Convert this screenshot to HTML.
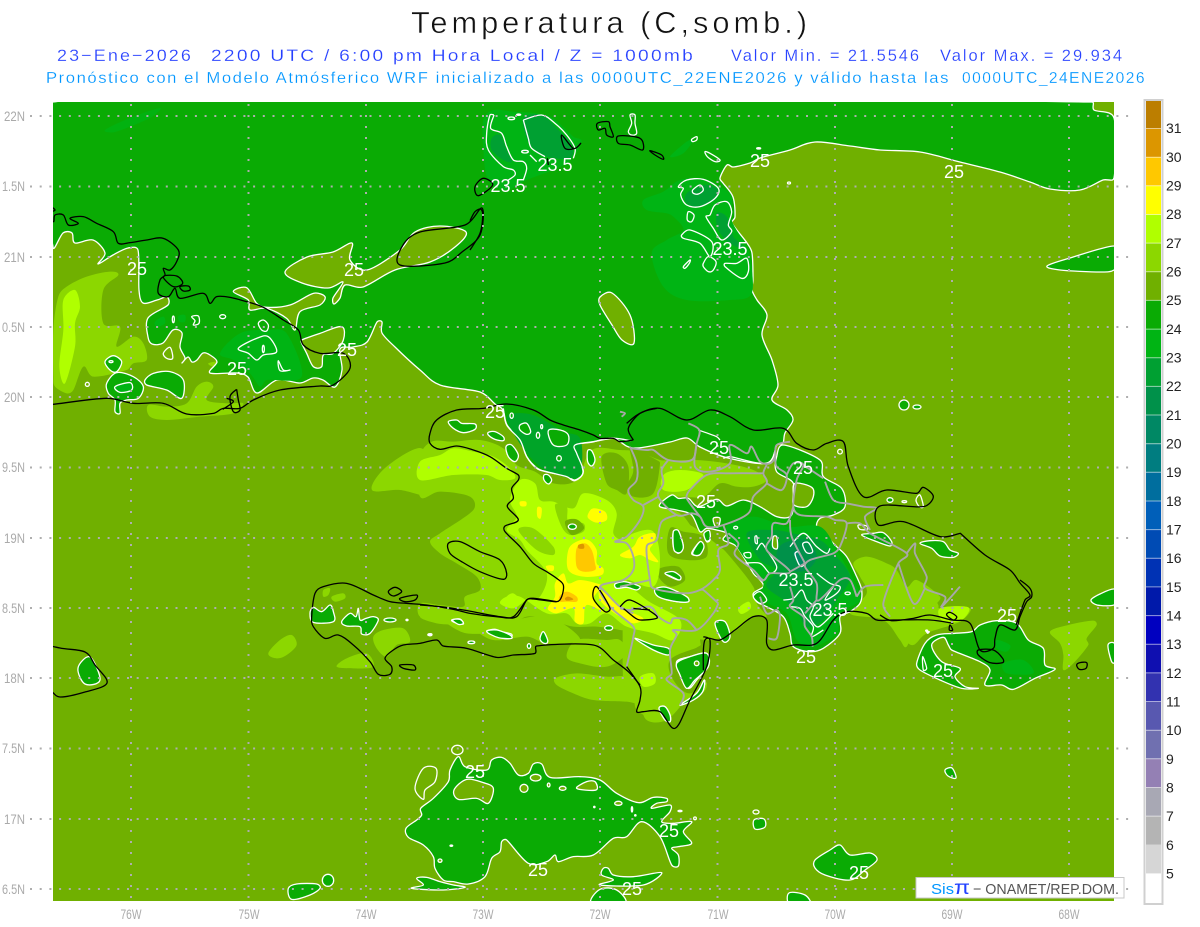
<!DOCTYPE html>
<html><head><meta charset="utf-8"><title>Temperatura</title>
<style>
html,body{margin:0;padding:0;background:#fff;width:1200px;height:927px;overflow:hidden}
svg{display:block;font-family:"Liberation Sans",sans-serif;filter:blur(.3px)}
svg *{vector-effect:non-scaling-stroke}
.lt{fill:#8CD700}.lm{fill:#B0FF00}.ol{fill:#70B000}.yl{fill:#FFFF00}.or{fill:#FFC800}.dk{fill:#DC9600}
.a{fill:#00B414}.b{fill:#00A032}.c{fill:#00914A}.d{fill:#008864}.e{fill:#00A428}
.g{fill:#0AAB04;stroke:#fff;stroke-width:1.3;stroke-linejoin:round}
.o{fill:#70B000;stroke:#fff;stroke-width:1.3;stroke-linejoin:round}
.w{fill:none;stroke:#fff;stroke-width:1.3;stroke-linejoin:round}
.k{fill:none;stroke:#000;stroke-width:1.3;stroke-linejoin:round}
.p{fill:none;stroke:#A8A8A8;stroke-width:1.9;stroke-linejoin:round}
.lab text{fill:#fff;font-size:18px;text-anchor:middle}
.ax text{fill:#AAAAAA;font-size:14px}
.cb text{fill:#222;font-size:14px}
</style></head><body>
<svg width="1200" height="927" viewBox="0 0 1200 927" xmlns="http://www.w3.org/2000/svg">
<rect width="1200" height="927" fill="#fff"/>
<text x="411" y="33" font-size="31" fill="#111" textLength="400" lengthAdjust="spacingAndGlyphs" letter-spacing="4" stroke="#fff" stroke-width=".5">Temperatura (C,somb.)</text>
<g font-size="17" fill="#2640FF" letter-spacing="2" stroke="#fff" stroke-width=".2">
<text x="57" y="61" textLength="136" lengthAdjust="spacingAndGlyphs">23−Ene−2026</text>
<text x="211" y="61" textLength="484" lengthAdjust="spacingAndGlyphs">2200 UTC / 6:00 pm Hora Local / Z = 1000mb</text>
<text x="731" y="61" textLength="190" lengthAdjust="spacingAndGlyphs">Valor Min. = 21.5546</text>
<text x="940" y="61" textLength="184" lengthAdjust="spacingAndGlyphs">Valor Max. = 29.934</text>
</g>
<g font-size="16" fill="#0096FF" letter-spacing="1.5" stroke="#fff" stroke-width=".2">
<text x="46" y="83" textLength="904" lengthAdjust="spacingAndGlyphs">Pronóstico con el Modelo Atmósferico WRF inicializado a las 0000UTC_22ENE2026 y válido hasta las</text>
<text x="962" y="83" textLength="184" lengthAdjust="spacingAndGlyphs">0000UTC_24ENE2026</text>
</g>
<defs><clipPath id="m"><rect x="53" y="102" width="1061" height="799"/></clipPath></defs>
<g clip-path="url(#m)">
<rect x="53" y="102" width="1061" height="799" fill="#70B000"/>

<!-- Cuba warm patches -->
<g transform="translate(0,190) scale(.33333)">
<polygon class="lt" points="160,420 175,320 200,290 260,260 330,245 355,255 310,300 310,400 360,410 350,470 400,440 430,460 440,510 400,520 380,540 280,560 250,530 220,600 200,610 165,590 160,560"/>
<polygon class="lm" points="190,330 225,300 240,350 225,400 225,470 195,580 178,530 190,420"/>
<polygon class="lt" points="445,645 500,650 560,640 590,590 620,575 640,590 620,630 680,640 730,640 700,670 600,680 500,690 450,680"/>
<polygon class="lt" points="625,520 660,515 680,530 640,530"/>
</g>

<!-- Haiti base light -->
<polygon class="lt" points="372,490 385,468 420,448 430,470 430,495 400,490"/>
<g transform="translate(420,400) scale(.33333)">
<polygon class="lt" points="405,835 470,820 560,830 620,830 660,860 665,910 620,905 520,900 460,880 410,855"/>
<polygon class="lt" points="0,170 35,125 100,125 180,120 250,145 290,195 345,215 400,250 470,240 515,150 600,150 650,155 720,180 760,190 740,300 800,360 880,500 900,640 840,690 860,860 800,900 740,960 680,960 660,900 630,780 640,700 600,690 530,680 460,680 390,660 320,650 250,690 140,700 60,660 0,650 0,610 60,615 130,620 135,590 180,570 170,530 110,490 60,460 30,425 60,400 160,330 150,290 60,275 0,290"/>
</g>

<!-- DR warm/cool detail base -->
<g transform="translate(620,400) scale(.33333)">
<polygon class="lt" points="120,185 220,180 320,190 400,210 440,240 400,260 350,260 300,250 250,290 180,290 120,295 100,340 130,370 200,370 300,440 330,470 400,560 410,610 440,650 400,650 350,690 280,720 220,720 190,770 200,900 150,920 100,950 50,930 40,880 10,850 10,500 10,200"/>
<polygon class="ol" points="150,385 190,395 250,410 260,470 200,480 145,460"/>
<polygon class="ol" points="120,505 175,500 195,540 150,560 115,530"/>
<polygon class="ol" points="225,745 265,735 270,830 210,880 160,840 150,780"/>
<polygon class="ol" points="20,100 60,150 110,180 120,190 100,280 40,290 20,260 40,210"/>
<polygon class="lm" points="180,235 205,232 210,245 185,250"/>
<polygon class="lm" points="355,625 385,605 392,625 365,642"/>
<polygon class="lm" points="130,225 180,210 250,225 200,270 130,270"/>
<polygon class="lt" points="700,490 740,470 800,490 830,510 860,560 890,540 960,590 950,620 1020,650 1020,665 900,660 860,740 840,720 790,660 690,640 740,580 720,530"/>
</g>
<g transform="translate(880,580) scale(.33333)">
<polygon class="lt" points="510,155 565,135 640,122 650,135 620,175 625,195 580,250 550,270 550,225 540,190"/>
<polygon class="lt" points="100,30 130,10 150,40 175,75 175,110 270,85 240,125 140,160 100,195 70,175 30,125 0,100 0,60 30,60 60,70"/>
<polygon class="lm" points="180,85 265,82 245,120 190,125"/>
</g>

<!-- Haiti warm detail -->
<g transform="translate(420,400) scale(.33333)">
<polygon class="ol" points="545,170 590,160 625,200 620,280 590,270 560,250"/>
<polygon class="lm" points="0,185 60,165 100,145 160,155 220,170 270,205 285,235 240,240 200,225 100,225 0,240"/>
<polygon class="lm" points="300,240 345,250 360,300 400,305 460,325 490,280 560,300 590,340 580,400 610,420 640,400 700,395 720,480 700,560 620,540 680,600 780,660 760,720 700,700 620,680 560,640 510,670 470,670 440,640 380,640 300,590 260,590 240,610 280,625 320,600 360,590 380,520 320,450 300,420 260,390 290,350 270,300"/>
<polygon class="lt" points="295,390 340,385 400,440 400,465 350,450"/>
<polygon class="lt" points="405,315 440,320 445,365 490,370 490,395 450,405 425,380"/>
<polygon class="ol" points="435,365 470,358 492,385 455,405"/>
<polygon class="lt" points="180,500 220,510 250,540 200,530"/>
<polygon class="lt" points="440,770 470,720 560,720 600,720 620,760 560,800 480,790"/>
<polygon class="lm" points="660,830 700,820 705,850 670,860"/>
<polygon class="lm" points="260,590 280,580 298,600 280,620 262,610"/>
<polygon class="yl" points="505,340 520,325 555,335 560,360 530,368 505,355"/>
<polygon class="yl" points="300,305 318,305 318,318 302,318"/>
<polygon class="yl" points="352,322 365,325 362,355 352,350"/>
<polygon class="yl" points="378,498 400,497 400,512 385,512"/>
<polygon class="yl" points="470,425 505,420 530,450 530,490 550,505 545,525 490,530 445,510 445,450"/>
<polygon class="yl" points="385,620 405,590 405,550 430,520 445,550 480,540 530,550 545,560 520,600 560,640 500,615 490,670 465,665 460,625 410,640 385,630"/>
<polygon class="yl" points="540,570 580,600 620,630 670,655 640,670 600,650 570,630 540,600"/>
<polygon class="yl" points="600,465 640,440 660,410 705,400 700,430 690,450 715,485 690,480 660,465 630,475"/>
<polygon class="or" points="470,445 495,430 515,450 525,490 525,510 490,515 470,500"/>
<polygon class="or" points="418,590 440,575 470,590 470,605 440,605 420,605"/>
<polygon class="dk" points="475,435 490,432 492,445 476,445"/>
<polygon class="dk" points="435,595 445,590 460,598 440,602"/>
</g>

<!-- Haiti south peninsula -->
<g transform="translate(280,560) scale(.33333)">
<polygon class="lt" points="-35,280 0,240 35,225 50,255 20,285 -10,295"/>
<polygon class="lt" points="170,320 200,295 260,280 280,320 220,325"/>
<polygon class="lt" points="280,230 310,210 370,205 390,245 350,255 320,290 290,265"/>
<polygon class="lt" points="130,90 150,85 145,105 130,110"/>
<polygon class="lt" points="155,110 190,100 195,115 165,125"/>
<polygon class="lt" points="420,170 470,150 560,170 650,190 760,170 830,180 900,240 800,250 740,230 640,240 560,200 470,190"/>
</g>

<!-- Main northern green -->
<polygon class="g" points="53,102 1092,102 1094,110 1114,118 1114,178 1103,180 1080,190 1050,189 1030,182 1000,172 960,162 920,152 880,150 850,146 815,142 790,150 760,158 750,163 733,167 727,165 720,178 723,183 733,197 735,217 732,223 747,243 752,253 753,280 752,290 757,300 767,315 762,335 772,360 778,385 772,400 787,410 793,420 785,433 783,443 777,445 767,463 728,458 700,447 687,438 670,442 633,448 613,438 593,442 575,445 577,453 583,472 575,480 567,476 547,472 537,468 527,457 520,440 507,425 503,410 495,404 480,392 440,385 420,370 395,347 382,333 382,322 377,322 367,342 353,347 340,349 342,370 335,387 323,380 313,378 300,383 277,380 257,393 248,377 237,373 210,373 217,362 210,355 203,353 197,360 192,362 188,357 182,363 185,358 180,347 182,333 173,330 163,343 152,344 148,337 148,318 168,305 167,297 157,300 143,303 139,290 138,250 128,248 113,255 98,264 105,253 93,240 75,243 72,233 63,233 53,247"/>
<polygon class="a" points="105,130 130,118 160,108 150,118 115,132" opacity=".8"/>

<!-- Bahamas & NE cool patches -->
<g transform="translate(470,100) scale(.33333)">
<polygon class="a" points="40,60 70,30 130,35 200,40 250,55 310,110 335,125 290,190 170,240 110,270 55,240 40,150"/>
<polygon class="b" points="160,55 215,45 270,95 305,135 300,175 230,170 190,145 170,115"/>
<polygon class="b" points="65,115 90,105 110,150 125,185 100,180 65,150"/>
<polygon class="a" points="520,300 580,275 630,240 700,235 750,260 785,290 785,360 825,430 840,470 845,580 780,600 650,600 580,560 545,460 590,420 640,390 610,350 590,340 530,330"/>
<polygon class="a" points="600,170 650,125 670,120 640,160"/>
<polygon class="b" points="650,280 700,255 740,265 740,295 690,320 650,310"/>
<polygon class="b" points="740,340 770,350 790,410 800,420 830,450 780,430 745,390"/>
<polyline class="w" points="72,45 60,45 50,100 55,150 100,200 130,210 135,225 115,240"/>
<polyline class="w" points="72,45 62,85 95,100 110,140 130,180 160,185 170,205 160,240"/>
<polyline class="w" points="160,60 215,45 255,70 290,105 315,145 310,175"/>
<polyline class="w" points="160,60 175,115 185,145 225,170"/>
<ellipse class="w" cx="124" cy="55" rx="10" ry="4"/><ellipse class="w" cx="146" cy="44" rx="6" ry="2"/>
<ellipse class="w" cx="165" cy="155" rx="10" ry="4"/><polyline class="w" points="180,165 200,185"/>
<polygon class="w" points="480,45 495,45 495,70 500,100 485,105 475,95 485,70"/>
<polygon class="w" points="665,118 680,110 680,120 668,125"/>
<polygon class="w" points="705,155 720,160 750,180 735,185 712,170"/>
<ellipse class="w" cx="866" cy="145" rx="6" ry="2"/>
<polygon class="w" points="625,260 650,240 700,238 745,265 735,295 690,320 650,315 632,285 640,265"/>
<polygon class="w" points="668,270 690,255 700,270 685,282 670,280"/>
<polygon class="w" points="655,335 672,345 665,365 652,360"/>
<polygon class="w" points="720,345 735,315 770,305 785,335 775,375 785,395 755,420 730,385 708,350"/>
<polygon class="w" points="635,405 660,390 725,425 720,470 690,430 640,415"/>
<polygon class="w" points="700,490 715,470 738,485 730,510 715,515 700,500"/>
<polygon class="w" points="640,500 660,480 658,490 645,505"/>
<polygon class="w" points="765,490 800,490 830,475 835,515 815,535 765,500"/>
</g>

<!-- Olive islands in the north green -->
<polygon class="o" points="285,272 307,257 333,252 352,243 350,260 367,270 400,250 415,232 440,226 466,232 455,247 430,262 395,270 363,287 345,285 340,298 334,304 333,298 343,282 328,288 302,283"/>
<g transform="translate(0,190) scale(.33333)">
<polygon class="a" points="660,490 720,430 800,420 860,430 905,560 800,570 780,590 750,550 700,510"/>
<polygon class="a" points="465,395 490,380 495,400 470,410"/>
<polygon class="a" points="535,378 555,375 555,395 538,395"/>
<polygon class="o" points="700,305 740,293 770,340 800,352 870,345 940,310 975,320 960,345 900,365 885,420 860,385 800,355 750,360 745,330"/>
<polygon class="o" points="905,450 960,430 1025,410 1030,450 1000,490 970,495 965,530 940,530 920,490 905,460"/>
<polygon class="g" points="320,580 350,548 400,560 430,590 415,625 380,630 360,640 360,670 345,665 345,630 325,610"/>
<polygon class="a" points="345,590 390,578 395,600 360,607"/>
<polygon class="w" points="345,590 390,578 395,600 360,607"/>
<polygon class="g" points="315,515 340,497 365,515 350,545 330,540"/>
<ellipse class="w" cx="333" cy="515" rx="6" ry="3"/>
<polygon class="g" points="435,570 460,550 510,545 550,570 545,625 500,600 440,585"/>
<polygon class="o" points="490,490 510,472 518,505 500,505"/>
<circle class="w" cx="262" cy="583" r="6"/>
<polygon class="w" points="775,400 790,390 805,405 800,423 785,420"/>
<polygon class="w" points="715,475 770,445 805,440 830,485 790,495 770,510 745,490"/>
<ellipse class="w" cx="520" cy="388" rx="3" ry="10"/>
<polygon class="w" points="575,380 595,378 597,400 580,405 585,392"/>
<ellipse class="w" cx="668" cy="380" rx="9" ry="6"/>
<ellipse class="w" cx="790" cy="477" rx="3" ry="11"/>
<polygon class="w" points="835,512 850,540 870,540 840,542"/>
</g>
<polygon class="o" points="600,297 612,293 630,315 634,343 622,340 612,325 600,305"/>

<!-- Green sea lenses -->
<polygon class="g" points="1047,266 1070,258 1114,246 1120,258 1114,270 1100,272 1060,270"/>
<polygon class="g" points="1091,600 1100,594 1114,589 1120,597 1114,605 1097,605"/>
<polygon class="g" points="1108,645 1114,643 1120,653 1114,663 1111,660"/>
<circle class="g" cx="904" cy="405" r="5"/><ellipse class="g" cx="917" cy="407" rx="4" ry="2"/>
<ellipse class="w" cx="789" cy="183" rx="1.5" ry="1"/>
<polygon class="g" points="945,770 952,768 956,778 948,776"/>
<polygon class="g" points="815,860 830,850 840,845 850,855 870,853 877,860 865,870 850,880 825,875 815,868"/>
<polygon class="g" points="754,820 764,819 765,827 755,829"/>
<ellipse class="w" cx="756" cy="812" rx="3" ry="2"/>
<polygon class="g" points="789,893 805,895 810,905 790,905"/>

<!-- South sea blobs -->
<g transform="translate(280,740) scale(.33333)">
<polygon class="g" points="378,265 410,240 425,225 422,205 460,175 505,125 510,90 535,50 555,80 620,90 635,60 665,52 690,70 715,105 745,100 760,72 785,72 810,112 900,110 960,120 1010,160 1075,188 1120,172 1160,175 1160,185 1130,190 1115,205 1170,195 1170,215 1145,245 1180,250 1235,245 1210,275 1235,310 1195,320 1175,325 1195,345 1195,378 1175,375 1140,290 1085,245 1040,290 1000,295 940,345 880,350 835,365 825,345 800,365 745,370 680,300 665,305 660,335 635,355 615,410 565,432 520,425 490,420 465,385 460,350 430,315 385,292"/>
<polygon class="o" points="522,150 560,118 610,128 640,145 625,190 590,175 535,178"/>
<polygon class="o" points="890,145 920,125 945,125 948,150"/>
<polygon class="o" points="405,145 430,85 468,85 465,125 435,150 430,178"/>
<ellipse class="o" cx="532" cy="30" rx="17" ry="14"/>
<polygon class="g" points="410,415 440,412 480,425 520,435 555,442 490,450 395,445 430,435"/>
<polygon class="g" points="25,445 50,432 110,432 120,445 90,465 35,478"/>
<ellipse class="g" cx="144" cy="421" rx="17" ry="18"/>
<polygon class="g" points="970,385 985,385 1000,405 1060,410 1145,398 1090,435 960,435 1000,420 965,405"/>
<polygon class="g" points="935,490 960,448 1010,450 1035,490"/>
<ellipse class="o" cx="767" cy="113" rx="16" ry="10"/><ellipse class="o" cx="732" cy="145" rx="12" ry="12"/>
<ellipse class="o" cx="848" cy="145" rx="10" ry="6"/><ellipse class="o" cx="1015" cy="190" rx="11" ry="6"/>
<ellipse class="o" cx="806" cy="135" rx="4" ry="6"/><ellipse class="o" cx="1056" cy="208" rx="2" ry="8"/>
<ellipse class="o" cx="480" cy="362" rx="6" ry="5"/><ellipse class="w" cx="514" cy="317" rx="4" ry="2"/>
<ellipse class="w" cx="943" cy="201" rx="2" ry="2"/><ellipse class="w" cx="1200" cy="213" rx="6" ry="2"/><circle class="w" cx="1245" cy="235" r="4"/>
<ellipse class="w" cx="1066" cy="226" rx="2" ry="2"/>
</g>

<!-- East blob -->
<g transform="translate(880,580) scale(.33333)">
<polygon class="g" points="110,250 135,190 170,165 225,160 275,155 300,135 350,122 410,130 445,180 490,205 495,255 525,268 465,295 400,328 365,315 315,315 330,270 300,245 215,210 205,195 190,172 155,195 185,245 240,265 225,290 255,320 295,325 245,325 180,300 120,270"/>
<polygon class="a" points="370,250 430,240 460,280 380,280"/>
<polygon class="a" points="350,180 390,195 380,215 350,205"/>
<polygon class="w" points="128,230 140,265 130,270"/>
<polygon class="w" points="140,155 148,155 143,160" style="fill:#fff"/>
</g>

<!-- Haiti green loops -->
<g transform="translate(420,400) scale(.33333)">
<polygon class="e" points="265,45 340,45 430,95 480,115 485,200 465,235 380,212 325,165 275,90"/>
<polyline class="w" points="250,25 260,75 300,120 320,170 350,205 380,215 440,230 465,242 490,215 470,160 465,135 520,125 580,115 632,122"/>
<polygon class="g" points="85,65 110,60 125,70 165,72 165,88 130,98 100,85"/>
<polygon class="g" points="205,97 225,95 250,110 250,122 225,118 205,105"/>
<polygon class="g" points="258,140 275,135 295,165 285,185 265,170"/>
<polygon class="g" points="300,75 320,70 332,95 320,103 300,90"/>
<ellipse class="g" cx="275" cy="47" rx="5" ry="8"/><ellipse class="g" cx="365" cy="80" rx="3" ry="6"/>
<ellipse class="g" cx="354" cy="106" rx="5" ry="9"/><ellipse class="g" cx="417" cy="175" rx="7" ry="8"/>
<polygon class="g" points="385,92 420,90 445,105 440,135 400,135"/>
<polygon class="g" points="503,152 515,152 525,180 515,198 503,185"/>
<polygon class="g" points="372,225 385,225 395,240 385,252 372,240"/>
<ellipse class="g" cx="457" cy="380" rx="12" ry="8"/>
<polygon class="g" points="95,660 120,657 130,672 105,668"/>
<polygon class="g" points="200,693 225,688 245,695 275,703 268,716 240,712 225,698"/>
<ellipse class="o" cx="154" cy="727" rx="10" ry="3"/>
<polygon class="g" points="360,715 370,695 383,720 380,730 368,728"/>
<ellipse class="g" cx="327" cy="738" rx="5" ry="7"/>
<ellipse class="g" cx="566" cy="684" rx="12" ry="7"/>
<polygon points="22,703 35,700 35,708 25,708" fill="#fff"/>
<polygon class="g" points="585,552 610,545 635,550 660,560 650,570 620,562 590,565"/>
<polygon class="g" points="708,568 730,565 770,582 800,590 805,605 770,605 720,592"/>
<polygon class="g" points="735,520 755,518 780,530 775,540 750,530"/>
<polygon class="g" points="645,715 700,735 745,745 745,765 700,750"/>
<polygon class="g" points="770,785 810,770 860,760 860,800 830,840 805,865 785,825"/>
<ellipse class="o" cx="830" cy="790" rx="7" ry="7"/>
<polygon class="g" points="780,915 830,880 853,840 848,875 820,900"/>
<polygon class="g" points="717,925 735,920 750,945 750,965 735,960"/>
<polygon class="g" points="760,395 775,395 790,440 775,460 760,440"/>
<polygon class="g" points="815,460 840,425 850,440 838,465"/>
<polygon class="g" points="855,405 868,395 870,420 860,425"/>
</g>
<g transform="translate(280,560) scale(.33333)">
<polygon class="g" points="90,160 100,142 125,155 150,135 160,155 160,185 100,187"/>
<polygon class="g" points="185,185 210,160 228,170 235,145 240,180 258,175 280,170 295,180 270,220 245,222 240,200 200,198"/>
<ellipse class="g" cx="330" cy="180" rx="18" ry="6"/>
<ellipse class="w" cx="381" cy="180" rx="3" ry="2"/>
<ellipse class="g" cx="450" cy="224" rx="6" ry="3" style="fill:#fff"/>
<polygon class="g" points="518,180 540,178 550,190 535,193"/>
<ellipse class="g" cx="574" cy="247" rx="10" ry="4"/>
<polygon class="g" points="620,215 650,210 690,225 695,235 655,233"/>
</g>

<!-- Central DR green -->
<g transform="translate(620,400) scale(.33333)">
<polygon class="g" points="118,318 155,285 175,295 205,295 235,320 290,298 320,318 370,300 420,320 470,350 510,350 520,320 520,250 470,215 470,170 490,135 600,180 610,230 665,265 675,320 640,345 600,355 590,380 610,400 650,440 680,470 710,530 725,570 720,610 690,635 660,650 660,700 610,745 570,755 520,740 510,700 490,650 440,620 410,605 400,580 430,560 420,540 400,520 350,440 310,420 320,400 290,390 260,385 240,395 215,345 170,330"/>
<polygon class="o" points="525,250 575,262 580,290 560,320 522,315 520,285"/>
<polygon class="a" points="320,380 400,350 500,380 600,380 650,450 700,540 720,600 660,640 650,700 580,740 530,720 500,640 430,600 430,540 400,510 350,440"/>
<polygon class="b" points="380,400 460,390 520,400 600,420 640,460 690,530 650,600 610,660 560,680 520,620 440,560 470,510 420,480"/>
<polygon class="c" points="490,430 560,420 590,470 560,510 510,510 470,470"/>
<polygon class="d" points="520,460 535,455 552,490 540,498"/>
<polygon class="g" points="160,395 175,392 190,440 180,458 162,450"/>
<polygon class="g" points="218,460 240,425 252,440 238,465"/>
<polygon class="g" points="252,400 268,392 270,418 258,422"/>
<polygon class="g" points="135,520 160,515 182,530 178,540 155,530"/>
<polygon class="g" points="105,568 140,562 200,590 205,605 170,605 115,590"/>
<polygon class="g" points="400,590 420,575 440,600 420,610"/>
<polygon class="g" points="285,670 315,665 330,710 310,725"/>
<polygon class="g" points="170,790 210,770 260,760 265,800 225,840 200,865 180,825"/>
<ellipse class="o" cx="230" cy="790" rx="7" ry="7"/>
<polygon class="g" points="180,915 230,880 253,840 248,875 220,900"/>
<polygon class="g" points="117,925 135,920 150,945 150,965 135,960"/>
<polyline class="w" points="235,90 290,110 300,120"/>
<polyline class="w" points="310,175 330,170 440,190 470,135"/>
<polygon class="o" points="280,355 300,355 295,380 285,378"/>
<ellipse class="w" cx="347" cy="383" rx="6" ry="4"/>
<polygon class="w" points="405,410 410,408 412,430 406,428"/>
<polyline class="w" points="410,450 425,430 440,450 470,500 450,520 420,490 370,490"/>
<polygon class="o" points="460,410 470,410 472,445 458,440"/>
<polygon class="w" points="372,460 390,458 392,472 378,472"/>
<polygon class="w" points="525,462 535,456 553,490 540,498"/>
<polyline class="w" points="510,440 550,400 590,440 620,460 630,445"/>
<polygon class="w" points="548,432 565,428 578,455 560,458"/>
<polyline class="w" points="590,520 630,550 660,560 650,580 615,600 640,560"/>
<polyline class="w" points="490,600 520,595 545,570 560,600 580,620 570,650 590,680 610,670 640,640"/>
<polyline class="w" points="510,620 540,625 555,650 580,680 575,710 610,690"/>
<ellipse class="w" cx="683" cy="580" rx="8" ry="4"/>
<polygon class="o" points="715,375 740,378 742,388 720,388"/>
<polygon class="g" points="725,405 760,400 790,398 815,425 810,438 770,425"/>
<polygon class="g" points="900,430 930,422 970,425 990,450 1015,460 1000,472 960,468 935,445"/>
<ellipse class="g" cx="810" cy="300" rx="9" ry="7"/><ellipse class="w" cx="853" cy="305" rx="7" ry="3"/>
<polygon class="w" points="888,300 900,285 910,320 898,320"/>
<ellipse class="w" cx="660" cy="155" rx="7" ry="7"/>
<ellipse class="w" cx="920" cy="692" rx="3" ry="2" style="fill:#fff"/>
</g>

<!-- Jamaica blob -->
<polygon class="g" points="78,668 90,657 100,680 85,684"/>

<!-- Province lines -->
<g transform="translate(620,400) scale(.33333)">
<polyline class="p" points="33,145 80,150 100,150 145,180 215,180 230,130 238,90 205,70"/>
<polyline class="p" points="230,130 225,200 270,215 330,190 330,135 380,160 395,140 420,185 450,190 465,170 470,135 510,125"/>
<polyline class="p" points="145,180 125,210 130,250 115,290 170,345 215,340 240,350 260,380 310,375 385,340 400,290 440,250 430,220 440,195"/>
<polyline class="p" points="205,275 260,225 330,220 430,220"/>
<polyline class="p" points="205,275 200,295 240,350"/>
<polyline class="p" points="115,290 70,315"/>
<polyline class="p" points="170,345 125,365 110,420 80,440 90,540 100,565 190,580 240,570 280,540 300,510 295,450 325,430 310,375"/>
<polyline class="p" points="295,610 250,570 240,570"/>
<polyline class="p" points="295,610 280,640 230,690 160,690 170,705 150,750 155,820 140,840 190,880 180,915"/>
<polyline class="p" points="230,690 200,660 160,655 150,670 115,650 90,620 30,630 0,625"/>
<polyline class="p" points="90,540 0,560"/>
<polyline class="p" points="440,250 485,270 500,225 470,200 465,170"/>
<polyline class="p" points="500,225 520,190 550,195 530,240 520,320 540,345 620,350 645,360 680,370 660,440 640,460 570,480 555,500 590,550 590,600 610,590 660,540 690,540 710,590"/>
<polyline class="p" points="520,320 500,370 460,370 455,410 440,450 510,515 450,520 430,540 400,510 345,465 355,430 325,400"/>
<polyline class="p" points="510,515 555,490"/>
<polyline class="p" points="510,360 515,410 555,490"/>
<polyline class="p" points="510,560 520,600 510,620 550,650 555,680 575,710 578,740"/>
<polyline class="p" points="430,545 410,530"/>
<polyline class="p" points="420,590 440,640 470,630 480,650 470,715 445,715"/>
<polyline class="p" points="590,600 555,640"/>
<polyline class="p" points="680,370 720,370 750,400 860,460 835,490 790,610 810,650"/>
<polyline class="p" points="710,590 735,560 790,555"/>
<polyline class="p" points="860,460 885,430 885,460 920,530 915,565 975,590 965,620 1020,560"/>
<polyline class="p" points="835,490 880,610 915,565"/>
<polyline class="p" points="680,310 730,320 770,325 735,350 750,390"/>
<polyline class="p" points="615,245 640,300 680,310"/>
<polyline class="p" points="550,195 610,235"/>
</g>
<g transform="translate(420,400) scale(.33333)">
<polyline class="p" points="630,140 650,190 650,240 625,270 640,300 670,320 660,360 620,410 585,425 620,430 640,470 640,510 610,540 540,560 570,620 640,680 640,710 620,800"/>
<polyline class="p" points="600,35 615,40 605,50"/>
<polyline class="p" points="540,560 560,580 600,620 640,640"/>
</g>

<!-- Coasts -->
<g transform="translate(420,400) scale(.33333)">
<polyline class="k" points="640,120 600,125 580,115 540,115 520,105 480,90 430,75 390,60 340,30 260,12 190,25 110,30 50,60 30,100 30,130 60,148 110,138 160,150 210,170 260,205 295,225 295,240 275,265 280,295 262,320 295,360 255,378 255,395 300,440 340,490 380,515 410,535 430,555 425,590 410,605 340,597 320,600 290,650 240,650 130,630 60,620 0,615"/>
<polygon class="k" points="85,430 120,425 180,455 240,480 260,520 250,538 180,515 125,485 90,460"/>
<polygon class="k" points="520,595 530,560 570,625 555,635"/>
<polyline class="k" points="600,620 630,600 700,640 710,655 660,660 640,650 610,625"/>
<polyline class="k" points="635,625 690,630"/>
<polyline class="k" points="620,800 660,860 660,900 650,935 670,935 720,935 765,985 810,900 860,800 870,720 850,710"/>
<polyline class="k" points="640,120 625,85 660,40 710,25"/>
</g>
<g transform="translate(280,560) scale(.33333)">
<polyline class="k" points="830,125 760,115 740,120 700,170 650,170 570,160 520,148 440,135 380,130 330,125 280,105 200,70 130,80 105,100 95,170 100,200 135,235 175,225 220,255 270,305 295,343 330,343 335,320 315,295 340,270 370,255 420,250 470,240 490,258 560,265 650,292 700,285 765,280 770,258 940,255 1000,300 1045,335 1080,375"/>
<polygon class="k" points="325,95 345,82 365,95 340,108"/>
<polygon class="k" points="360,115 410,105 405,120 375,125"/>
<polygon class="k" points="360,315 400,315 405,330 370,325"/>
</g>
<g transform="translate(620,400) scale(.33333)">
<polyline class="k" points="20,70 60,40 120,25 200,60 270,30 330,50 400,90 490,85 530,130 580,150 620,130 670,125 685,200 730,290 800,270 890,280 910,262 940,290 910,320 780,318 775,375 850,365 960,410 1020,400"/>
<polyline class="k" points="250,810 255,720 300,720 345,690 400,650 440,660 440,730 460,750 520,735 590,730 640,660 680,635 740,640 770,660 820,660 930,660 1000,670"/>
</g>
<polyline class="k" points="960,533 985,555 1010,570 1020,583 1030,595 1025,600 1016,625"/>
<g transform="translate(880,580) scale(.33333)">
<polyline class="k" points="420,0 450,25 455,50 440,65 420,110 405,150 360,135 345,175 340,205 300,210 270,130 215,120 150,105 100,115 35,122 0,105"/>
<polygon class="k" points="295,210 340,210 368,235 368,248 330,248 295,225"/>
<polygon class="k" points="200,105 210,97 230,110 220,120"/>
<polygon class="k" points="210,135 218,150 208,150"/>
<polygon class="k" points="590,255 600,248 620,248 618,265 598,268"/>
</g>
<g transform="translate(0,190) scale(.33333)">
<polyline class="k" points="105,35 110,45 135,42 165,60 140,70 160,95 165,75 190,75 205,105 235,100 210,85 250,80 290,100 340,125 355,160 390,158 440,150 490,145 535,180 530,215 510,240 490,235 495,255 480,270 475,310 505,320 525,295 540,325 610,310 630,340 650,320 690,322 740,335 790,352 850,390 895,420 910,465 960,490 1030,490 1050,535 1000,585 960,588 840,600 760,630 720,655 670,655 640,670 560,672 490,640 400,640 320,625 160,643 105,650"/>
<polygon class="k" points="490,260 530,258 548,280 520,290"/>
<polygon class="k" points="540,290 565,288 570,300 550,303"/>
<polyline class="k" points="710,598 690,620 700,665 720,660 715,630 710,598"/>
<polyline class="k" points="680,625 700,635 668,658"/>
</g>
<polygon class="k" points="400,265 403,245 420,232 465,225 482,208 480,235 462,252 445,263"/>
<g transform="translate(470,100) scale(.33333)">
<polygon class="k" points="382,70 415,65 420,80 430,110 410,105 405,85 385,90"/>
<polygon class="k" points="445,108 510,115 518,150 480,135 445,130"/>
<polygon class="k" points="540,152 575,165 580,178 555,165"/>
<polygon class="k" points="275,105 310,145 332,130 315,145 285,145"/>
<polygon class="k" points="15,260 40,235 68,255 25,287"/>
<polyline class="k" points="232,175 235,195"/>
<polyline class="k" points="0,362 15,335 33,328 38,350 30,400 0,450"/>
</g>
<polyline class="k" points="35,633 38,642 60,648 85,652 95,665 107,683 85,692 60,697 50,690 35,680"/>
</g>

<!-- Grid -->
<g stroke="#AEAEAE" stroke-width="2" fill="none">
<path stroke-dasharray="2 7.7" d="M30 116H1134M30 186.500H1134M30 257H1134M30 327H1134M30 397H1134M30 467.500H1134M30 538H1134M30 608H1134M30 678H1134M30 748.500H1134M30 819H1134M30 889H1134"/>
<path stroke-dasharray="2 9" d="M131 104V906M248.500 104V906M366 104V906M483 104V906M600 104V906M717.500 104V906M835 104V906M952 104V906M1069 104V906"/>
</g>

<!-- Axis labels -->
<g class="ax" text-anchor="end" lengthAdjust="spacingAndGlyphs">
<text x="25" y="121" textLength="21" lengthAdjust="spacingAndGlyphs">22N</text><text x="25" y="191" textLength="23" lengthAdjust="spacingAndGlyphs">1.5N</text><text x="25" y="262" textLength="21" lengthAdjust="spacingAndGlyphs">21N</text><text x="25" y="332" textLength="23" lengthAdjust="spacingAndGlyphs">0.5N</text><text x="25" y="402" textLength="21" lengthAdjust="spacingAndGlyphs">20N</text><text x="25" y="472" textLength="23" lengthAdjust="spacingAndGlyphs">9.5N</text><text x="25" y="543" textLength="21" lengthAdjust="spacingAndGlyphs">19N</text><text x="25" y="613" textLength="23" lengthAdjust="spacingAndGlyphs">8.5N</text><text x="25" y="683" textLength="21" lengthAdjust="spacingAndGlyphs">18N</text><text x="25" y="753" textLength="23" lengthAdjust="spacingAndGlyphs">7.5N</text><text x="25" y="824" textLength="21" lengthAdjust="spacingAndGlyphs">17N</text><text x="25" y="894" textLength="23" lengthAdjust="spacingAndGlyphs">6.5N</text>
</g>
<g class="ax" text-anchor="middle">
<text x="131" y="919" textLength="21" lengthAdjust="spacingAndGlyphs">76W</text><text x="249" y="919" textLength="21" lengthAdjust="spacingAndGlyphs">75W</text><text x="366" y="919" textLength="21" lengthAdjust="spacingAndGlyphs">74W</text><text x="483" y="919" textLength="21" lengthAdjust="spacingAndGlyphs">73W</text><text x="600" y="919" textLength="21" lengthAdjust="spacingAndGlyphs">72W</text><text x="718" y="919" textLength="21" lengthAdjust="spacingAndGlyphs">71W</text><text x="835" y="919" textLength="21" lengthAdjust="spacingAndGlyphs">70W</text><text x="952" y="919" textLength="21" lengthAdjust="spacingAndGlyphs">69W</text><text x="1069" y="919" textLength="21" lengthAdjust="spacingAndGlyphs">68W</text>
</g>

<!-- Contour labels -->
<g class="lab">
<text x="760" y="167">25</text><text x="954" y="178">25</text><text x="137" y="275">25</text><text x="354" y="276">25</text><text x="347" y="356">25</text><text x="237" y="375">25</text><text x="495" y="418">25</text><text x="719" y="454">25</text><text x="803" y="474">25</text><text x="706" y="508">25</text><text x="1007" y="622">25</text><text x="806" y="663">25</text><text x="943" y="677">25</text><text x="475" y="778">25</text><text x="669" y="837">25</text><text x="538" y="876">25</text><text x="859" y="879">25</text><text x="632" y="895">25</text>
<text x="555" y="171">23.5</text><text x="508" y="192">23.5</text><text x="730" y="255">23.5</text><text x="796" y="586">23.5</text><text x="830" y="616">23.5</text>
</g>

<!-- Colour bar -->
<rect x="1144.500" y="100" width="18" height="804" fill="#fff" stroke="#D0D0D0" stroke-width="2"/>
<g>
<rect x="1146" y="101" width="15" height="27.500" fill="#BC7E00"/>
<rect x="1146" y="128.500" width="15" height="28.700" fill="#DC9600"/>
<rect x="1146" y="157.200" width="15" height="28.700" fill="#FFC800"/>
<rect x="1146" y="185.800" width="15" height="28.700" fill="#FFFF00"/>
<rect x="1146" y="214.500" width="15" height="28.700" fill="#B0FF00"/>
<rect x="1146" y="243.100" width="15" height="28.700" fill="#8CD700"/>
<rect x="1146" y="271.800" width="15" height="28.700" fill="#70B000"/>
<rect x="1146" y="300.400" width="15" height="28.700" fill="#0AAB04"/>
<rect x="1146" y="329.100" width="15" height="28.700" fill="#00B414"/>
<rect x="1146" y="357.700" width="15" height="28.700" fill="#00A032"/>
<rect x="1146" y="386.400" width="15" height="28.700" fill="#00914A"/>
<rect x="1146" y="415" width="15" height="28.700" fill="#008864"/>
<rect x="1146" y="443.700" width="15" height="28.700" fill="#007D80"/>
<rect x="1146" y="472.300" width="15" height="28.700" fill="#006E9E"/>
<rect x="1146" y="501" width="15" height="28.700" fill="#005FB9"/>
<rect x="1146" y="529.600" width="15" height="28.700" fill="#004BB4"/>
<rect x="1146" y="558.300" width="15" height="28.700" fill="#0032B4"/>
<rect x="1146" y="586.900" width="15" height="28.700" fill="#0019AA"/>
<rect x="1146" y="615.600" width="15" height="28.700" fill="#0000C0"/>
<rect x="1146" y="644.200" width="15" height="28.700" fill="#0F0FB0"/>
<rect x="1146" y="672.900" width="15" height="28.700" fill="#3232B0"/>
<rect x="1146" y="701.500" width="15" height="28.700" fill="#5858B0"/>
<rect x="1146" y="730.200" width="15" height="28.700" fill="#7070B0"/>
<rect x="1146" y="758.800" width="15" height="28.700" fill="#9480B4"/>
<rect x="1146" y="787.500" width="15" height="28.700" fill="#A8A8B4"/>
<rect x="1146" y="816.100" width="15" height="28.700" fill="#B4B4B4"/>
<rect x="1146" y="844.800" width="15" height="28.700" fill="#D6D6D6"/>
<rect x="1146" y="873.400" width="15" height="29.600" fill="#FFFFFF"/>
</g>
<path d="M1146 128.500H1161M1146 157.200H1161M1146 185.800H1161M1146 214.500H1161M1146 243.100H1161M1146 271.800H1161M1146 300.400H1161M1146 329.100H1161M1146 357.700H1161M1146 386.400H1161M1146 415H1161M1146 443.700H1161M1146 472.300H1161M1146 501H1161M1146 529.600H1161M1146 558.300H1161M1146 586.900H1161M1146 615.600H1161M1146 644.200H1161M1146 672.900H1161M1146 701.500H1161M1146 730.200H1161M1146 758.800H1161M1146 787.500H1161M1146 816.100H1161" stroke="#fff" stroke-opacity=".55" stroke-width="1" fill="none"/>
<g class="cb">
<text x="1166" y="133">31</text><text x="1166" y="162">30</text><text x="1166" y="190.500">29</text><text x="1166" y="219">28</text><text x="1166" y="248">27</text><text x="1166" y="276.500">26</text><text x="1166" y="305">25</text><text x="1166" y="334">24</text><text x="1166" y="362.500">23</text><text x="1166" y="391">22</text><text x="1166" y="420">21</text><text x="1166" y="448.500">20</text><text x="1166" y="477">19</text><text x="1166" y="506">18</text><text x="1166" y="534.500">17</text><text x="1166" y="563">16</text><text x="1166" y="592">15</text><text x="1166" y="620.500">14</text><text x="1166" y="649">13</text><text x="1166" y="678">12</text><text x="1166" y="706.500">11</text><text x="1166" y="735">10</text><text x="1166" y="764">9</text><text x="1166" y="792.500">8</text><text x="1166" y="821">7</text><text x="1166" y="850">6</text><text x="1166" y="878.500">5</text>
</g>

<!-- Watermark -->
<rect x="916" y="877.500" width="208" height="20.500" fill="#fff" stroke="#C8C8C8" stroke-width="1"/>
<text x="931" y="894" font-size="15" fill="#0096FF" textLength="23" lengthAdjust="spacingAndGlyphs">Sis</text>
<text x="954" y="894" font-size="19" fill="#2040FF" textLength="16" lengthAdjust="spacingAndGlyphs">π</text>
<text x="973" y="894" font-size="15" fill="#555" textLength="146" lengthAdjust="spacingAndGlyphs">− ONAMET/REP.DOM.</text>
</svg>
<script>
(function(){
var NS="http://www.w3.org/2000/svg";
document.querySelectorAll("svg polygon,svg polyline").forEach(function(el){
  var n=el.getAttribute("points").trim().split(/\s+/).map(function(s){var a=s.split(",");return[+a[0],+a[1]]});
  var closed=el.tagName.toLowerCase()==="polygon",L=n.length;
  if(L<3)return;
  function P(i){return closed?n[(i+L)%L]:n[Math.max(0,Math.min(L-1,i))]}
  function H(a,b,s){var x=(b[0]-a[0])/6,y=(b[1]-a[1])/6,m=Math.hypot(x,y);var lim=.4*s;if(m>lim&&m>0){x*=lim/m;y*=lim/m}return[x,y]}
  var d="M"+n[0][0]+" "+n[0][1],end=closed?L:L-1;
  for(var i=0;i<end;i++){
    var p0=P(i-1),p1=P(i),p2=P(i+1),p3=P(i+2),s=Math.hypot(p2[0]-p1[0],p2[1]-p1[1]);
    var t1=H(p0,p2,s),t2=H(p1,p3,s);
    d+="C"+(p1[0]+t1[0]).toFixed(1)+" "+(p1[1]+t1[1]).toFixed(1)+" "+(p2[0]-t2[0]).toFixed(1)+" "+(p2[1]-t2[1]).toFixed(1)+" "+p2[0]+" "+p2[1];
  }
  if(closed)d+="Z";
  var q=document.createElementNS(NS,"path");
  for(var k=0;k<el.attributes.length;k++){var a=el.attributes[k];if(a.name!=="points")q.setAttribute(a.name,a.value)}
  q.setAttribute("d",d);
  el.parentNode.replaceChild(q,el);
});
})();
</script>
</body></html>
